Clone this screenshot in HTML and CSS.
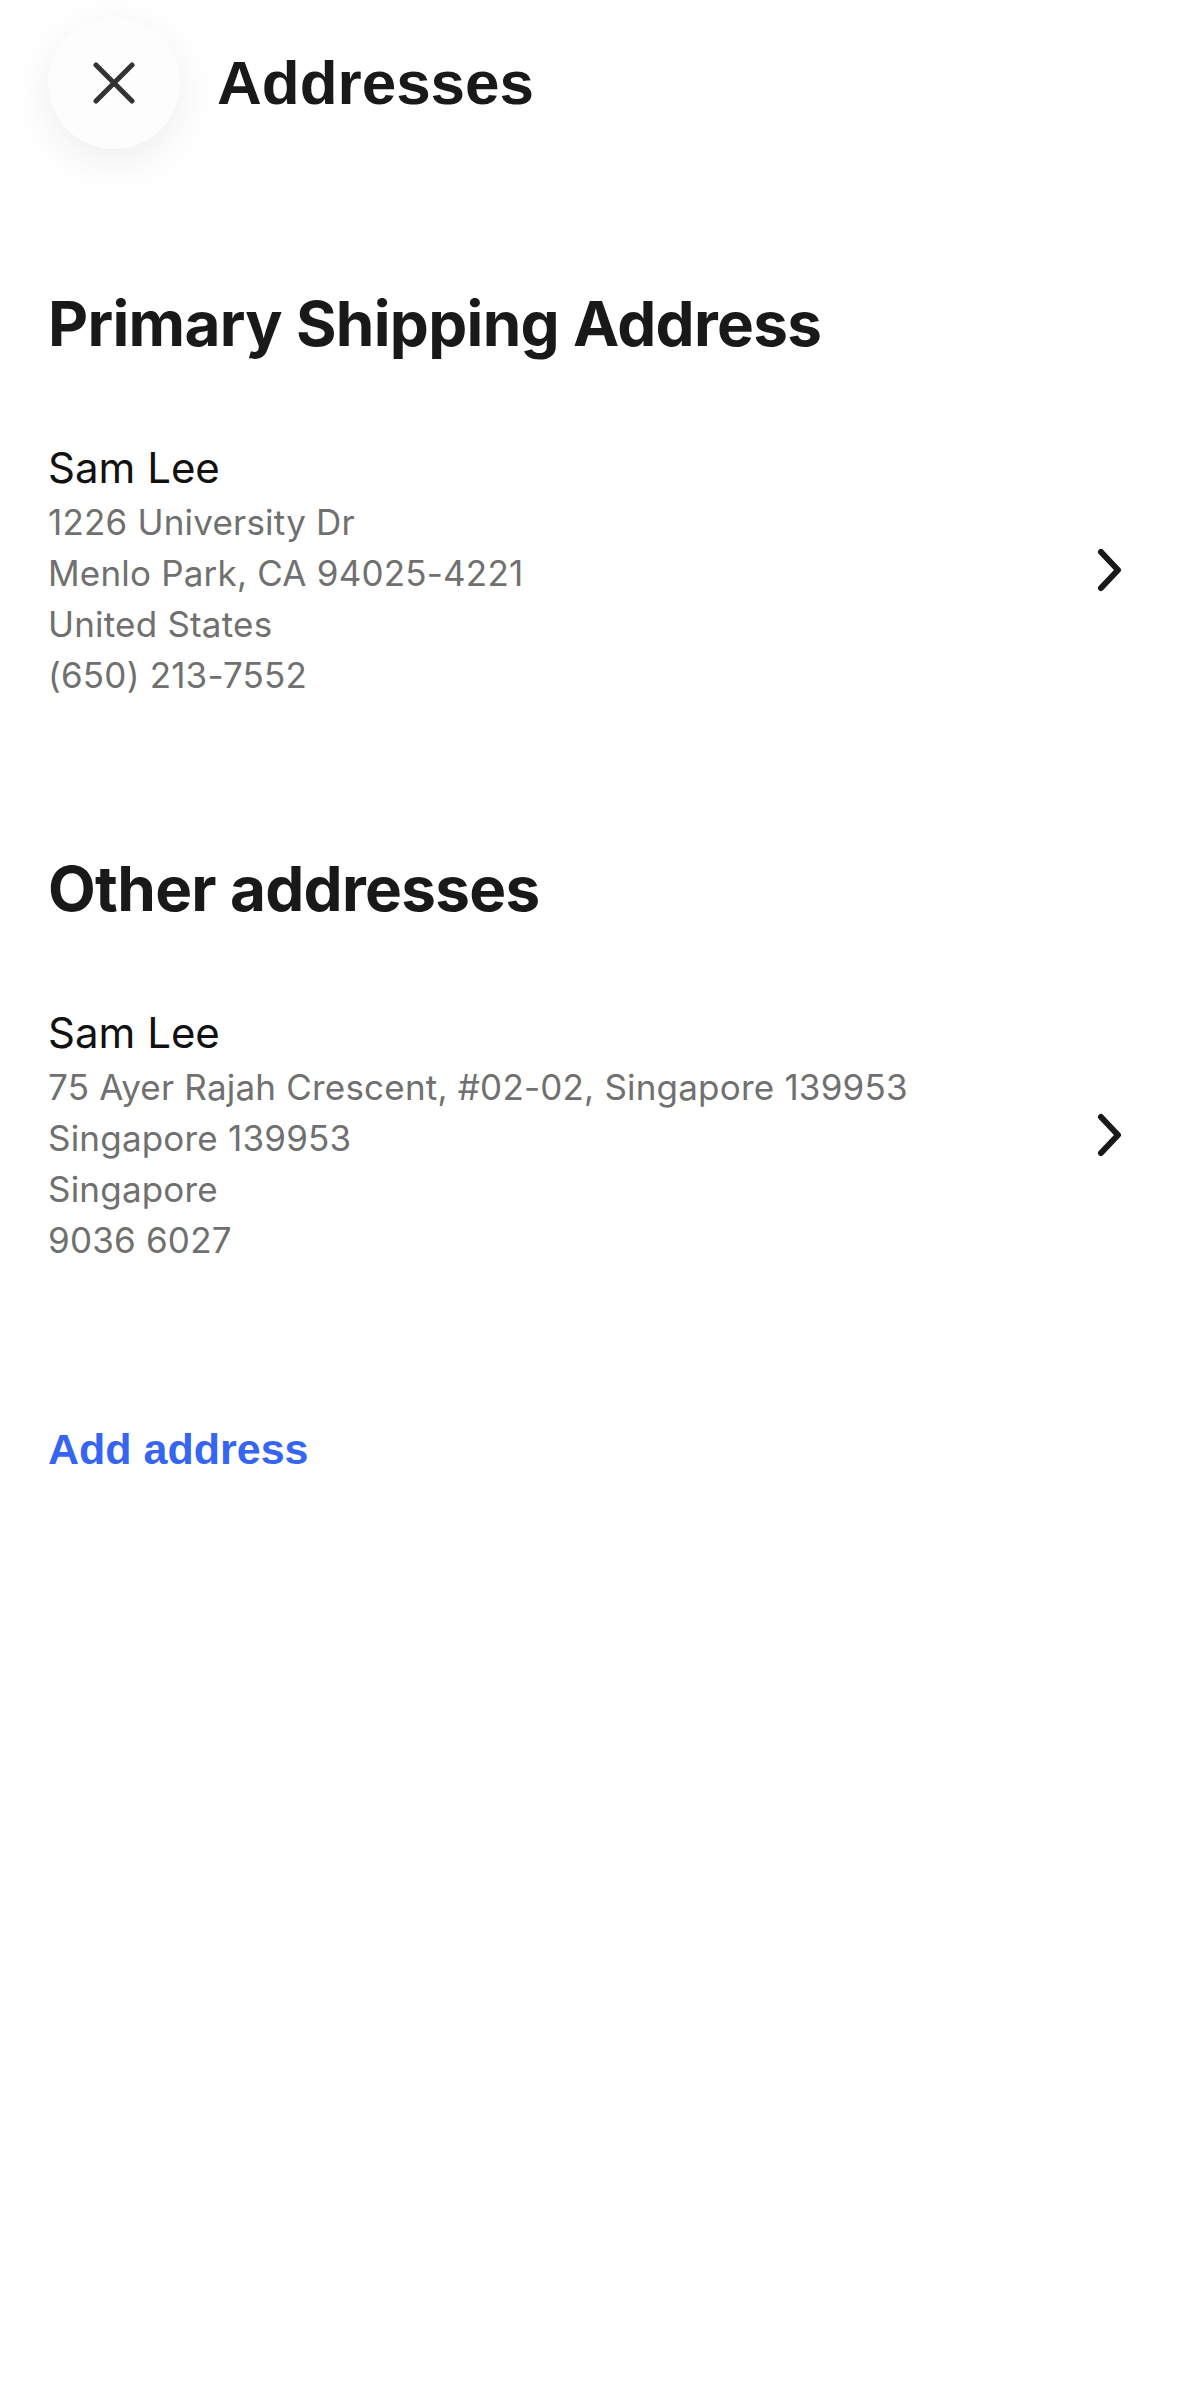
FILE: index.html
```html
<!DOCTYPE html>
<html lang="en">
<head>
  <meta charset="UTF-8" />
  <meta name="viewport" content="width=device-width, initial-scale=1.0" />
  <title>Addresses</title>
  <link rel="stylesheet" href="styles.css">
</head>
<body>
  <div class="page">
    <!-- Header -->
    <header class="header">
      <button class="close-btn" aria-label="Close">
        <svg width="42" height="42" viewBox="0 0 42 42">
          <path d="M3 3 L39 39 M39 3 L3 39" stroke="#333" stroke-width="5" stroke-linecap="round" fill="none" />
        </svg>
      </button>
      <h1>Addresses</h1>
    </header>

    <!-- Primary -->
    <section class="section first">
      <h2>Primary Shipping Address</h2>
      <div class="address-row">
        <div class="address">
          <div class="name">Sam Lee</div>
          <div class="line">1226 University Dr</div>
          <div class="line">Menlo Park, CA 94025-4221</div>
          <div class="line">United States</div>
          <div class="line">(650) 213-7552</div>
        </div>
        <svg class="chevron" width="48" height="48" viewBox="0 0 48 48">
          <polyline points="15,6 32,24 15,42" stroke="#191919" stroke-width="6" stroke-linecap="round" stroke-linejoin="round" fill="none" />
        </svg>
      </div>
    </section>

    <!-- Others -->
    <section class="section">
      <h2>Other addresses</h2>
      <div class="address-row">
        <div class="address">
          <div class="name">Sam Lee</div>
          <div class="line">75 Ayer Rajah Crescent, #02-02, Singapore 139953</div>
          <div class="line">Singapore 139953</div>
          <div class="line">Singapore</div>
          <div class="line">9036 6027</div>
        </div>
        <svg class="chevron" width="48" height="48" viewBox="0 0 48 48">
          <polyline points="15,6 32,24 15,42" stroke="#191919" stroke-width="6" stroke-linecap="round" stroke-linejoin="round" fill="none" />
        </svg>
      </div>
    </section>

    <a class="add-link" href="#">Add address</a>
  </div>
</body>
</html>
```

FILE: styles.css
```css
* {
  box-sizing: border-box;
}

body {
  margin: 0;
  padding: 0;
  background: #fff;
  font-family: Inter, Roboto, "Liberation Sans", sans-serif;
  color: #111;
}

.page {
  min-height: 100vh;
}

.header {
  display: flex;
  align-items: center;
  padding: 17px 0 0 48px;
}

.close-btn {
  width: 132px;
  height: 132px;
  border: none;
  border-radius: 50%;
  background: #fdfdfd;
  box-shadow: 0 12px 44px rgba(0, 0, 0, 0.07);
  display: flex;
  align-items: center;
  justify-content: center;
  padding: 0;
  cursor: pointer;
}

h1 {
  margin: 0 0 0 37px;
  font-family: "Liberation Sans", Arial, sans-serif;
  font-size: 62px;
  font-weight: bold;
  line-height: 74px;
  color: #191919;
}

.section {
  padding: 0 45px 0 48px;
  margin-top: 151px;
}

.section.first {
  margin-top: 138px;
}

h2 {
  margin: 0;
  font-size: 62px;
  font-weight: bold;
  line-height: 74px;
  color: #191919;
  letter-spacing: -0.7px;
}

.address-row {
  display: flex;
  align-items: center;
  justify-content: space-between;
  padding-top: 78px;
}

.name {
  font-size: 42px;
  line-height: 58px;
  color: #111;
}

.line {
  font-size: 35px;
  line-height: 51px;
  color: #707070;
  letter-spacing: 0.2px;
}

.chevron {
  flex-shrink: 0;
}

.add-link {
  display: block;
  margin: 158px 0 0 48px;
  font-family: "Liberation Sans", Arial, sans-serif;
  font-size: 43px;
  font-weight: bold;
  line-height: 50px;
  color: #3665f3;
  text-decoration: none;
}
```
